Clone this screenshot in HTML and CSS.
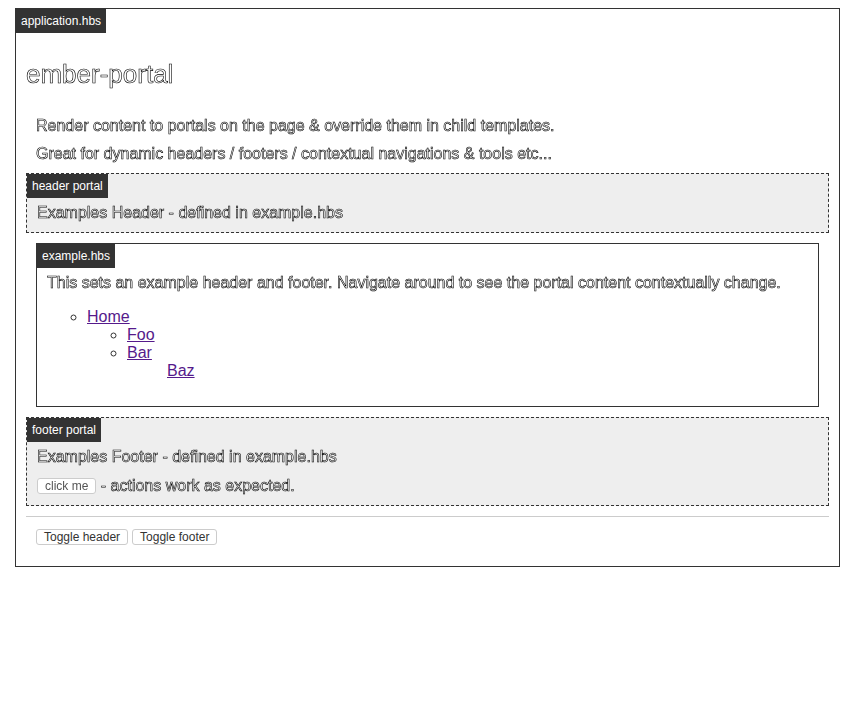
FILE: index.html
```html
<!DOCTYPE html>
<html>
<head>
<meta charset="utf-8">
<link rel="stylesheet" href="styles.css">
</head>
<body>
<div class="tpl app">
  <div class="label">application.hbs</div>
  <h1 class="title outline">ember-portal</h1>
  <p class="lead outline">Render content to portals on the page &amp; override them in child templates.</p>
  <p class="lead last outline">Great for dynamic headers / footers / contextual navigations &amp; tools etc...</p>
  <div class="portal">
    <div class="label">header portal</div>
    <p class="ptext outline">Examples Header - defined in example.hbs</p>
  </div>
  <div class="tpl example">
    <div class="label">example.hbs</div>
    <p class="etext outline">This sets an example header and footer. Navigate around to see the portal content contextually change.</p>
    <ul class="nav">
      <li><a href="#">Home</a>
        <ul>
          <li><a href="#">Foo</a></li>
          <li><a href="#">Bar</a>
            <ul>
              <li><a href="#">Baz</a></li>
            </ul>
          </li>
        </ul>
      </li>
    </ul>
  </div>
  <div class="portal">
    <div class="label">footer portal</div>
    <p class="ptext outline">Examples Footer - defined in example.hbs</p>
    <p class="ptext outline"><button class="btn btn-light">click me</button> - actions work as expected.</p>
  </div>
  <hr class="rule">
  <div class="toggles">
    <button class="btn">Toggle header</button>
    <button class="btn">Toggle footer</button>
  </div>
</div>
</body>
</html>
```
FILE: styles.css
```css
body {
  margin: 8px 14px 8px 15px;
  font-family: "Liberation Sans", Arial, sans-serif;
  color: #333;
  background: #fff;
}
.outline {
  color: #fff;
  -webkit-text-stroke: 0.6px #000;
  filter: grayscale(1);
}
.tpl {
  border: 1px solid #333;
  background: #fff;
}
.app {
  padding: 0 10px 21px 10px;
  box-sizing: border-box;
  width: 825px;
}
.app > .label {
  margin-left: -10px;
}
.label {
  display: block;
  width: fit-content;
  background: #333;
  color: #fff;
  font-size: 12px;
  line-height: 16px;
  padding: 4px 5px;
}
.title {
  font-size: 26px;
  font-weight: normal;
  margin: 26px 0 28px 0;
  line-height: 30px;
}
.lead {
  font-size: 16px;
  line-height: 18px;
  margin: 0 0 10px 10px;
}
.portal {
  border: 1px dashed #333;
  background: #eee;
  padding-bottom: 10px;
}
.ptext {
  font-size: 16px;
  line-height: 18px;
  margin: 6px 10px 0 10px;
}
.portal .ptext + .ptext {
  margin-top: 11px;
}
.example {
  margin: 10px 10px;
  padding-bottom: 26px;
}
.etext {
  font-size: 16px;
  line-height: 18px;
  margin: 6px 10px 16px 10px;
}
.nav {
  margin: 0;
  padding-left: 50px;
  list-style: circle;
  font-size: 16px;
  line-height: 18px;
}
.nav ul {
  padding-left: 40px;
  margin: 0;
  list-style: circle;
}
.nav ul ul {
  list-style: none;
}
.nav a {
  color: #551a8b;
}
.btn {
  font-family: "Liberation Sans", Arial, sans-serif;
  font-size: 12px;
  line-height: 12px;
  padding: 1px 7px;
  background: #fff;
  border: 1px solid #ccc;
  border-radius: 3px;
  color: #333;
  vertical-align: 1px;
}
.btn-light {
  color: #555;
  -webkit-text-stroke: 0;
}
.rule {
  border: 0;
  border-top: 1px solid #ccc;
  margin: 10px 0 12px 0;
}
.toggles {
  padding-left: 10px;
  display: flex;
  gap: 4px;
}
```
